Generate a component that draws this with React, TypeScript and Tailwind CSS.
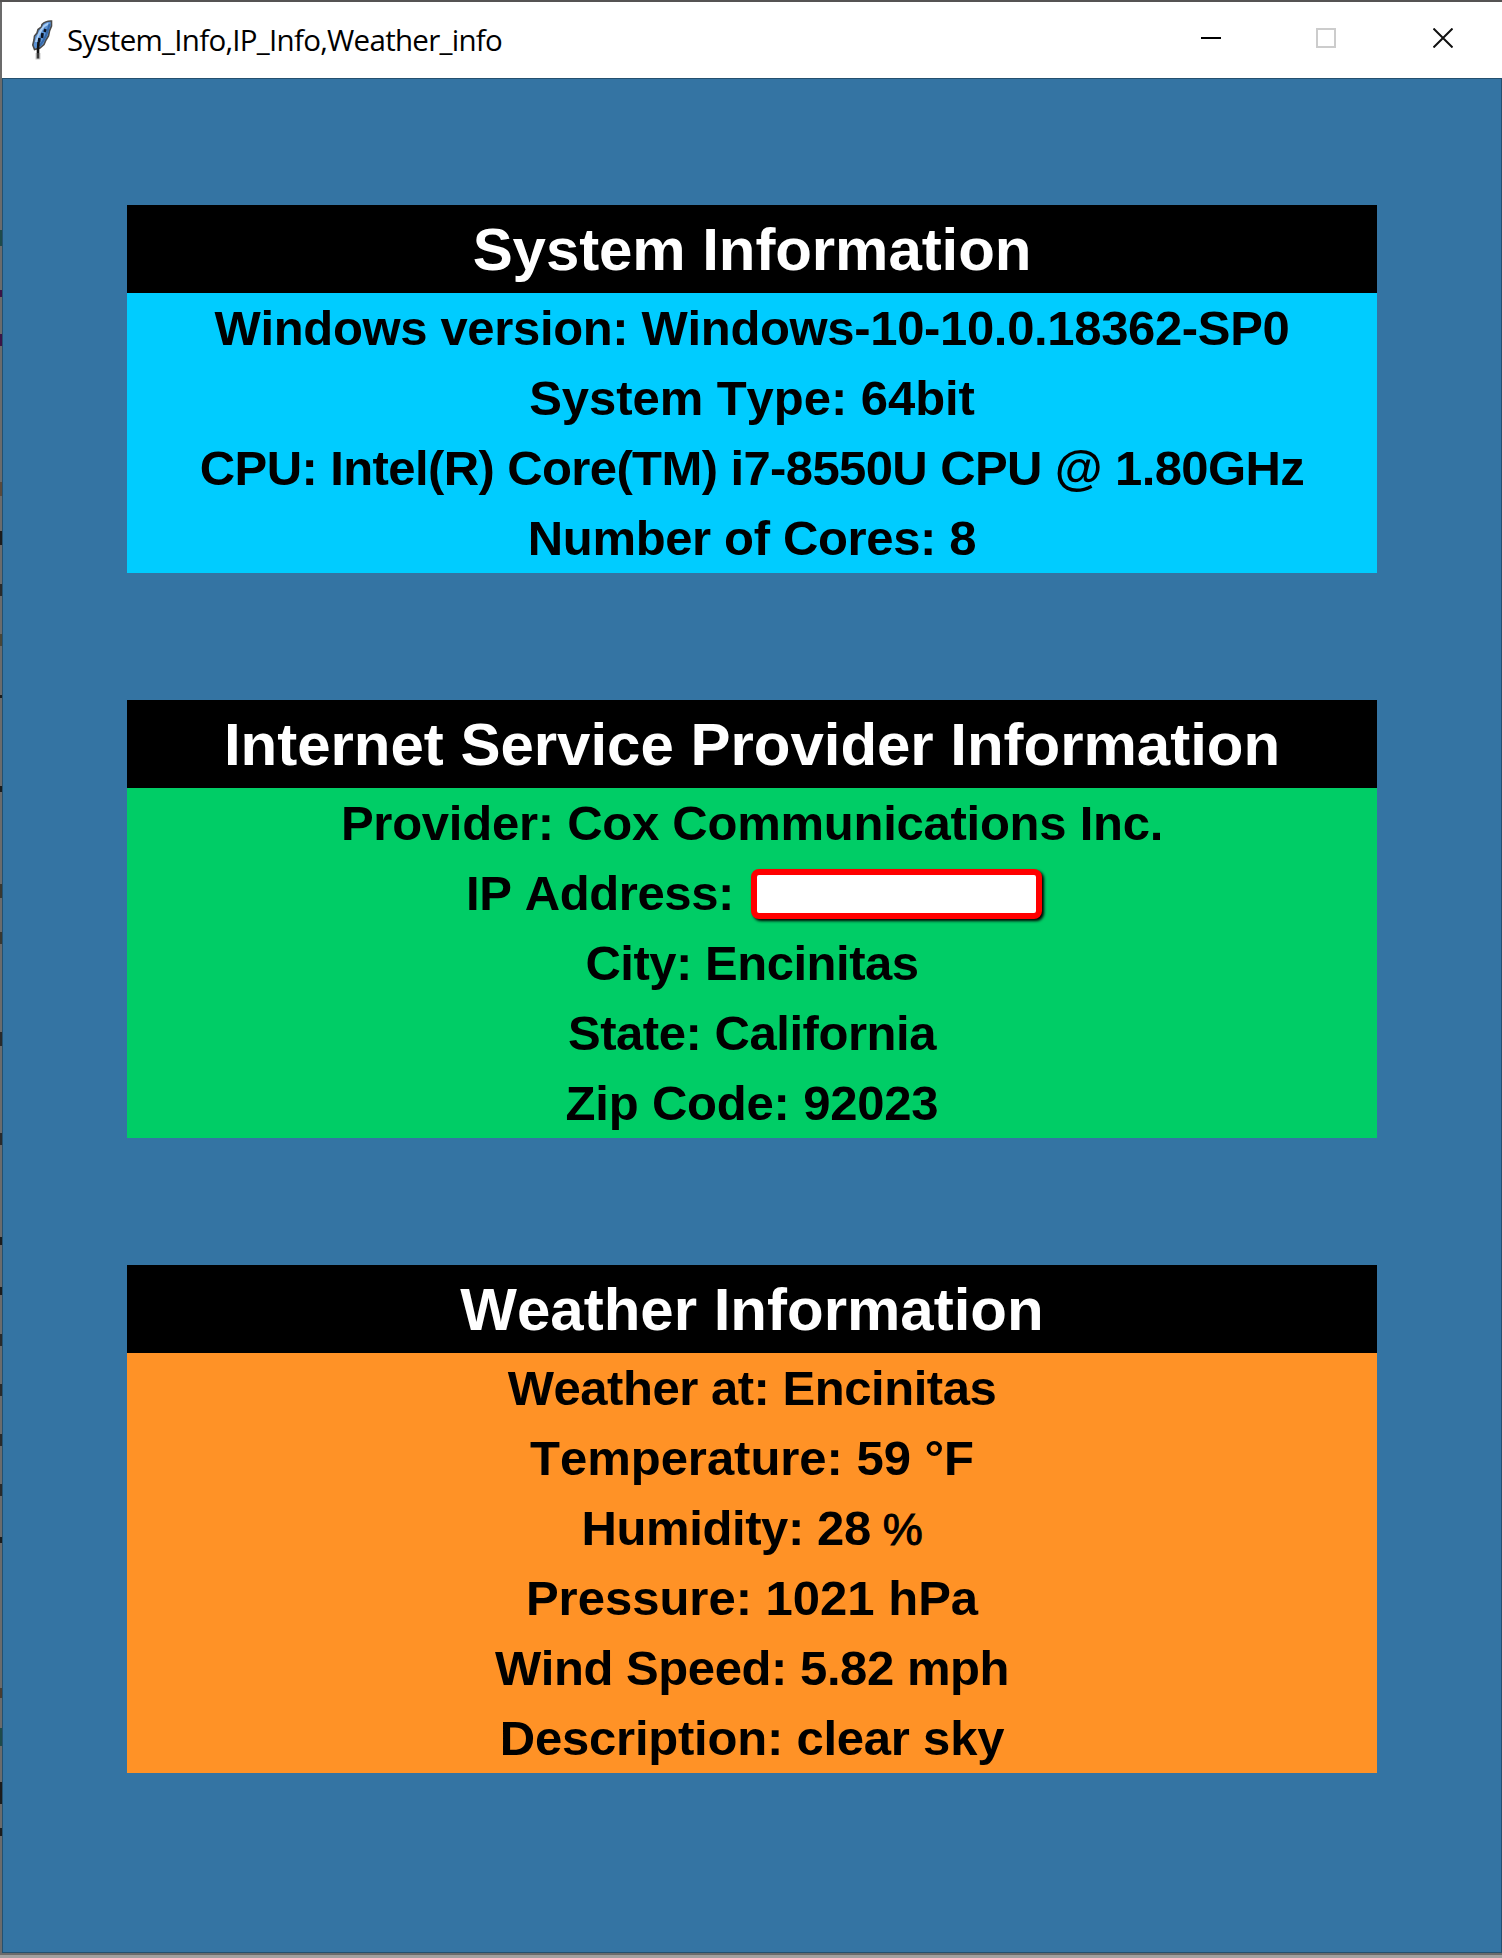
type Line = { text: string; tracking: string; redacted?: boolean; unit?: string };

// Slivers of the window behind, visible along the left edge.
const edgeMarks = [
  { top: 230, height: 16, color: "#1f4a4a" },
  { top: 290, height: 7, color: "#3c1446" },
  { top: 334, height: 12, color: "#3c1446" },
  { top: 482, height: 14, color: "#5a4a3c" },
  { top: 531, height: 14, color: "#1c1c1c" },
  { top: 584, height: 12, color: "#2a2a2a" },
  { top: 634, height: 12, color: "#4a4638" },
  { top: 695, height: 3, color: "#1c1c1c" },
  { top: 786, height: 6, color: "#1c1c1c" },
  { top: 884, height: 14, color: "#3a3830" },
  { top: 932, height: 12, color: "#3a3830" },
  { top: 1032, height: 14, color: "#2a2a2a" },
  { top: 1133, height: 12, color: "#2a2a2a" },
  { top: 1237, height: 8, color: "#1c1c1c" },
  { top: 1287, height: 8, color: "#1c1c1c" },
  { top: 1334, height: 12, color: "#2a2a2a" },
  { top: 1384, height: 12, color: "#2a2a2a" },
  { top: 1434, height: 12, color: "#2a2a2a" },
  { top: 1484, height: 12, color: "#2a2a2a" },
  { top: 1537, height: 6, color: "#1c1c1c" },
  { top: 1688, height: 10, color: "#4a3c30" },
  { top: 1728, height: 18, color: "#1f4a4a" },
  { top: 1782, height: 22, color: "#1c1c1c" },
  { top: 1828, height: 8, color: "#1c1c1c" },
];

function Feather() {
  return (
    <svg className="-mt-px ml-[29px] h-10 w-[22px] shrink-0" viewBox="0 0 22 40" fill="none">
      <path d="M20.5 1 C17 0.8 13.5 2 11 4.5 L10.5 7 L7 9.5 L6 13 L3.5 16 L3 20 L1.8 25 L3.5 29.5 L9 28 L13 24.5 L15 20 L17.5 16 L18.5 11 L20.5 6Z" fill="#5b93d6" stroke="#4a4a4a" strokeWidth="1.6" />
      <path d="M17.5 3.5 C13 5 8 12 5 22" stroke="#a9cdf3" strokeWidth="2.2" />
      <path d="M18.5 4 C17 11 14 20 8.5 26" stroke="#3568a8" strokeWidth="2" />
      <path d="M14.5 9 L13.5 12 M11.5 13 L11 18 M8.5 18 L8 22" stroke="#0b1220" strokeWidth="2.6" />
      <path d="M7.5 22 L7 30 L7 38.5" stroke="#111" strokeWidth="2.6" />
      <path d="M7 33 L7 39.5" stroke="#777" strokeOpacity="0.4" strokeWidth="5" />
    </svg>
  );
}

function TitleBar() {
  return (
    <header className="flex h-19 items-center bg-white">
      <Feather />
      <h1 className="ml-[14px] whitespace-nowrap font-['Open_Sans'] text-[29.5px] leading-10 tracking-[-0.72px] text-black">
        System_Info,IP_Info,Weather_info
      </h1>
      <div className="mb-1 ml-auto flex items-center pr-[49px]">
        <div className="h-[2px] w-5 bg-black" />
        <div className="ml-[95px] size-5 border-2 border-[#cccccc]" />
        <svg className="ml-[97px] size-5" viewBox="0 0 20 20" stroke="#111" strokeWidth="2">
          <path d="M0.5 0.5 L19.5 19.5 M19.5 0.5 L0.5 19.5" />
        </svg>
      </div>
    </header>
  );
}

function Panel({ title, color, lines }: { title: Line; color: string; lines: Line[] }) {
  return (
    <section className="w-[1250px]">
      <h2 className={`h-[88px] bg-black text-center text-[60px] leading-[89px] text-white ${title.tracking}`}>
        {title.text}
      </h2>
      <ul className={color}>
        {lines.map((line) => (
          <li key={line.text} className={`flex h-[70px] justify-center text-[49px] leading-[70px] text-black ${line.tracking}`}>
            <span className={line.redacted ? "ml-[4px]" : ""}>
              {line.text}
              {line.unit && (
                <span className="ml-[12px] text-[45px] font-normal [-webkit-text-stroke:1px_black]">{line.unit}</span>
              )}
            </span>
            {line.redacted && (
              <span className="ml-[17px] mt-[11px] h-[50px] w-[291px] rounded-[8px] border-[6px] border-[#ff0000] bg-white shadow-[2px_2px_3px_#000000]" />
            )}
          </li>
        ))}
      </ul>
    </section>
  );
}

export default function App() {
  return (
    <div className="relative flex h-[1958px] w-[1502px] flex-col overflow-hidden border-b-3 border-t-2 border-b-[#a0a0a0] border-t-[#555353] bg-[#6b6b6b] pb-[2px] pl-[2px]">
      {edgeMarks.map((mark) => (
        <i key={mark.top} className="absolute left-0 w-[2px]" style={{ top: mark.top - 2, height: mark.height, background: mark.color }} />
      ))}
      <TitleBar />
      <main className="flex flex-1 flex-col items-center gap-[127px] border border-[#24506f] bg-[#3474a3] pt-[126px] font-['Liberation_Sans'] font-bold whitespace-nowrap [font-kerning:none]">
        <Panel
          title={{ text: "System Information", tracking: "tracking-[-0.08px]" }}
          color="bg-[#00ccff]"
          lines={[
            { text: "Windows version: Windows-10-10.0.18362-SP0", tracking: "tracking-[-0.34px]" },
            { text: "System Type: 64bit", tracking: "tracking-[-0.05px]" },
            { text: "CPU: Intel(R) Core(TM) i7-8550U CPU @ 1.80GHz", tracking: "tracking-[-0.6px]" },
            { text: "Number of Cores: 8", tracking: "tracking-[-0.35px]" },
          ]}
        />
        <Panel
          title={{ text: "Internet Service Provider Information", tracking: "tracking-[-0.02px]" }}
          color="bg-[#00cd66]"
          lines={[
            { text: "Provider: Cox Communications Inc.", tracking: "tracking-[-0.25px]" },
            { text: "IP Address:", tracking: "tracking-[-0.4px]", redacted: true },
            { text: "City: Encinitas", tracking: "tracking-[-0.48px]" },
            { text: "State: California", tracking: "tracking-[-0.45px]" },
            { text: "Zip Code: 92023", tracking: "tracking-[-0.2px]" },
          ]}
        />
        <Panel
          title={{ text: "Weather Information", tracking: "tracking-[0px]" }}
          color="bg-[#ff9226]"
          lines={[
            { text: "Weather at: Encinitas", tracking: "tracking-[-0.47px]" },
            { text: "Temperature: 59 °F", tracking: "tracking-[-0.03px]" },
            { text: "Humidity: 28", unit: "%", tracking: "tracking-[-0.4px]" },
            { text: "Pressure: 1021 hPa", tracking: "tracking-[0px]" },
            { text: "Wind Speed: 5.82 mph", tracking: "tracking-[-0.43px]" },
            { text: "Description: clear sky", tracking: "tracking-[-0.22px]" },
          ]}
        />
      </main>
    </div>
  );
}
